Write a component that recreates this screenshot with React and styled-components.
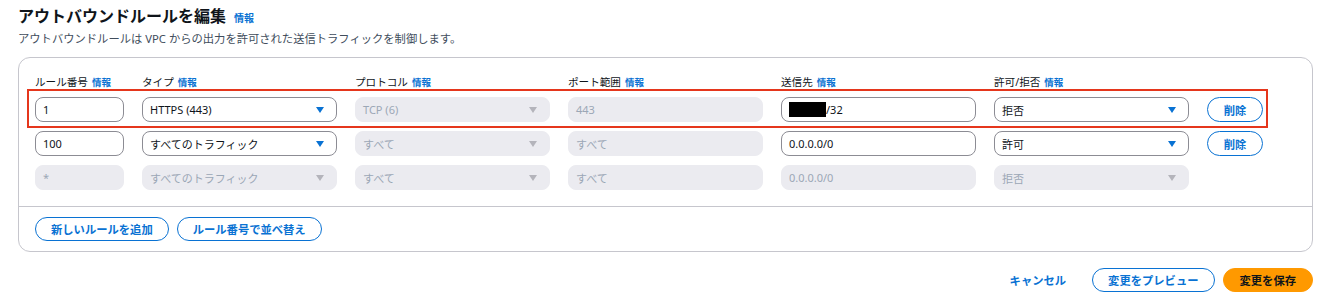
import React from "react";
import styled, { createGlobalStyle } from "styled-components";

const GlobalStyle = createGlobalStyle`
  body {
    margin: 0;
    background: #ffffff;
    font-family: "Noto Sans", "Noto Sans CJK JP", sans-serif;
    color: #0f141a;
  }
`;

const Page = styled.div`
  padding: 5px 17px 0 18px;
`;

const Title = styled.h1`
  display: flex;
  align-items: baseline;
  gap: 8px;
  margin: 0;
  font-size: 16px;
  line-height: 22px;
  font-weight: 700;
`;

const Info = styled.span`
  color: #0972d3;
  font-size: ${(props) => (props.$small ? 9.5 : 10)}px;
  font-weight: 700;
`;

const Description = styled.p`
  margin: 2px 0 0;
  font-size: 11.3px;
  line-height: 16px;
  color: #414d5c;
`;

const Panel = styled.section`
  margin-top: 10px;
  border: 1px solid #c6c6cd;
  border-radius: 12px;
  background: #fff;
`;

const RulesArea = styled.div`
  padding: 15px 17px 16px 16px;
  display: flex;
  flex-direction: column;
  gap: 9px;
`;

const Row = styled.div`
  position: relative;
  width: max-content;
  display: grid;
  grid-template-columns: 89px repeat(5, 195px) 56px;
  column-gap: 18px;
  align-items: center;
  height: ${(props) => (props.$header ? 16 : 25)}px;
  margin-bottom: ${(props) => (props.$header ? -1 : 0)}px;

  ${(props) =>
    props.$highlight &&
    `
    &::after {
      content: "";
      position: absolute;
      left: -8px;
      right: -5px;
      top: -8px;
      bottom: -6px;
      border: 2.5px solid #e5361c;
      pointer-events: none;
    }
  `}
`;

const Label = styled.div`
  display: flex;
  align-items: baseline;
  gap: 4px;
  font-size: 10.6px;
  color: #0f141a;
  white-space: nowrap;
`;

const Field = styled.div`
  box-sizing: border-box;
  height: 25px;
  display: flex;
  align-items: center;
  justify-content: ${(props) => (props.$select ? "space-between" : "flex-start")};
  padding: 0 ${(props) => (props.$select ? 12 : 7)}px 0 7px;
  border-radius: 8px;
  border: 1px solid ${(props) => (props.$disabled ? "#ebebf0" : "#8c8c94")};
  background: ${(props) => (props.$disabled ? "#ebebf0" : "#ffffff")};
  color: ${(props) => (props.$disabled ? "#9ba7b6" : "#0f141a")};
  font-size: 11px;
  white-space: nowrap;
`;

const Caret = styled.span`
  width: 0;
  height: 0;
  border-left: 4.5px solid transparent;
  border-right: 4.5px solid transparent;
  border-top: 6px solid ${(props) => (props.$disabled ? "#b4b4bb" : "#0972d3")};
`;

const Masked = styled.span`
  display: inline-block;
  width: 37px;
  height: 15px;
  background: #000;
`;

const PillButton = styled.button`
  box-sizing: border-box;
  height: ${(props) => props.$height || 24}px;
  padding: 0 ${(props) => props.$padX || 15}px;
  border-radius: 20px;
  border: 1.5px solid
    ${(props) => (props.$primary ? "#ff9900" : props.$link ? "transparent" : "#0972d3")};
  background: ${(props) => (props.$primary ? "#ff9900" : "#ffffff")};
  color: ${(props) => (props.$primary ? "#0f141a" : "#0972d3")};
  font-family: "Noto Sans", "Noto Sans CJK JP", sans-serif;
  font-size: 11.3px;
  font-weight: 700;
  white-space: nowrap;
  cursor: pointer;
`;

const PanelFooter = styled.div`
  border-top: 1px solid #c6c6cd;
  padding: 10px 16px 10px;
  display: flex;
  gap: 8px;
`;

const Actions = styled.div`
  margin-top: 16px;
  display: flex;
  justify-content: flex-end;
  align-items: center;
  gap: 8px;
`;

const columns = ["ルール番号", "タイプ", "プロトコル", "ポート範囲", "送信先", "許可/拒否"];

const rules = [
  {
    number: "1",
    type: "HTTPS (443)",
    protocol: "TCP (6)",
    port: "443",
    dest: "/32",
    masked: true,
    action: "拒否",
    editable: true,
    highlight: true,
  },
  {
    number: "100",
    type: "すべてのトラフィック",
    protocol: "すべて",
    port: "すべて",
    dest: "0.0.0.0/0",
    action: "許可",
    editable: true,
  },
  {
    number: "*",
    type: "すべてのトラフィック",
    protocol: "すべて",
    port: "すべて",
    dest: "0.0.0.0/0",
    action: "拒否",
    editable: false,
  },
];

const Select = ({ value, disabled }) => (
  <Field $select $disabled={disabled}>
    <span>{value}</span>
    <Caret $disabled={disabled} />
  </Field>
);

const RuleRow = ({ rule }) => {
  const off = !rule.editable;
  return (
    <Row $highlight={rule.highlight}>
      <Field $disabled={off}>{rule.number}</Field>
      <Select value={rule.type} disabled={off} />
      <Select value={rule.protocol} disabled />
      <Field $disabled>{rule.port}</Field>
      <Field $disabled={off}>
        {rule.masked && <Masked />}
        {rule.dest}
      </Field>
      <Select value={rule.action} disabled={off} />
      {rule.editable ? (
        <PillButton $height={25} $padX={10}>
          削除
        </PillButton>
      ) : (
        <span />
      )}
    </Row>
  );
};

const App = () => {
  return (
    <Page>
      <GlobalStyle />
      <Title>
        アウトバウンドルールを編集
        <Info>情報</Info>
      </Title>
      <Description>
        アウトバウンドルールは VPC からの出力を許可された送信トラフィックを制御します。
      </Description>
      <Panel>
        <RulesArea>
          <Row $header>
            {columns.map((name) => (
              <Label key={name}>
                {name}
                <Info $small>情報</Info>
              </Label>
            ))}
          </Row>
          {rules.map((rule) => (
            <RuleRow key={rule.number} rule={rule} />
          ))}
        </RulesArea>
        <PanelFooter>
          <PillButton>新しいルールを追加</PillButton>
          <PillButton>ルール番号で並べ替え</PillButton>
        </PanelFooter>
      </Panel>
      <Actions>
        <PillButton $link $padX={17}>
          キャンセル
        </PillButton>
        <PillButton>変更をプレビュー</PillButton>
        <PillButton $primary $padX={16}>
          変更を保存
        </PillButton>
      </Actions>
    </Page>
  );
};

export default App;
